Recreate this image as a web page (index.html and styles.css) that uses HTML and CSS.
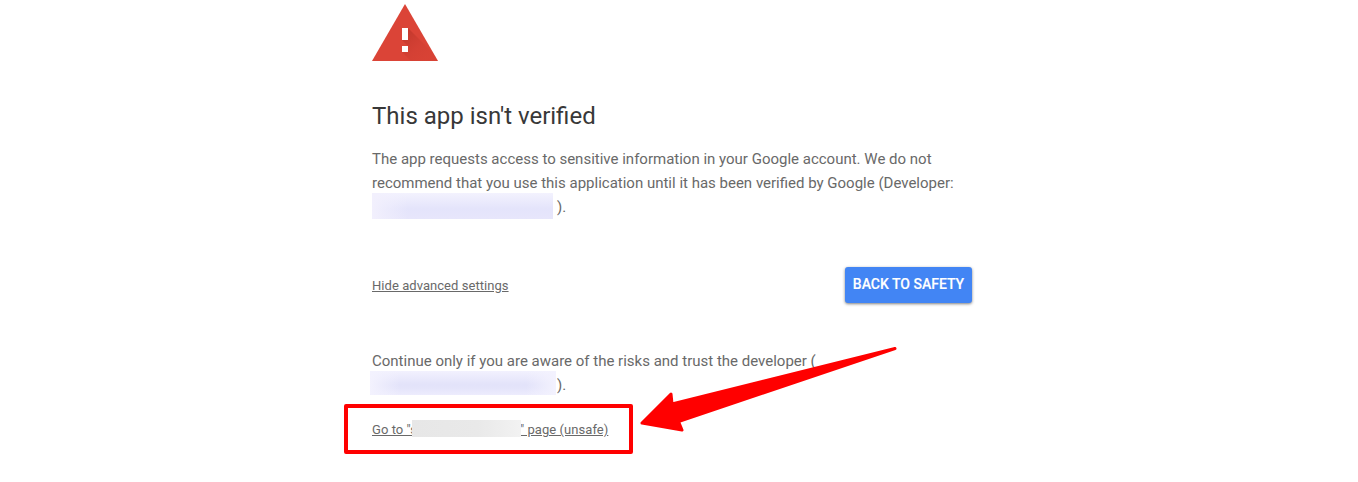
FILE: index.html
```html
<!DOCTYPE html>
<html lang="en">
<head>
<meta charset="utf-8">
<title>This app isn't verified</title>
<link rel="stylesheet" href="styles.css">
</head>
<body>
<main class="warning">
  <svg class="warning-icon" width="66" height="57" viewBox="0 0 66 57" aria-hidden="true">
    <defs>
      <clipPath id="triangle"><path d="M33 0L66 57H0z"/></clipPath>
      <linearGradient id="shade" gradientUnits="userSpaceOnUse" x1="31" y1="30" x2="54" y2="53">
        <stop offset="0" stop-color="#a52a20" stop-opacity=".45"/>
        <stop offset=".6" stop-color="#b83228" stop-opacity=".2"/>
        <stop offset="1" stop-color="#c53929" stop-opacity=".15"/>
      </linearGradient>
    </defs>
    <path d="M33 0L66 57H0z" fill="#db4437"/>
    <path d="M36 24L69 57H39L30 48L36 42L30 36z" fill="url(#shade)" clip-path="url(#triangle)"/>
    <path d="M30 24h6v12h-6zM30 42h6v6h-6z" fill="#fff"/>
  </svg>
  <h1 class="title">This app isn't verified</h1>
  <p class="text">The app requests access to sensitive information in your Google account. We do not<br>recommend that you use this application until it has been verified by Google (Developer:<br><span class="redacted redacted-first"></span>).</p>
  <div class="actions">
    <a class="link" href="#">Hide advanced settings</a>
    <button class="safe-button" type="button">BACK TO SAFETY</button>
  </div>
  <p class="text">Continue only if you are aware of the risks and trust the developer (<br><span class="redacted redacted-second"></span>).</p>
  <div class="highlight"><a class="link" href="#">Go to "s<span class="redacted redacted-name"></span>" page (unsafe)</a></div>
</main>
<svg class="arrow" width="260" height="88" viewBox="638 346 260 88" aria-hidden="true">
  <path d="M642 423L671 394L672 404L895 348.500L678.500 421.500L682 430z" fill="#f00" stroke="#f00" stroke-width="3" stroke-linejoin="round"/>
</svg>
</body>
</html>
```
FILE: styles.css
```css
body {
  margin: 0;
  background: #fff;
  color: #696969;
  font-family: Roboto, sans-serif;
}

.warning {
  width: 600px;
  margin-left: 372px;
  padding-top: 4px;
}

.warning-icon {
  display: block;
}

.title {
  margin: 39px 0 15px;
  color: #383838;
  font-size: 24px;
  font-weight: 400;
  line-height: 32px;
}

.text {
  margin: 0;
  font-size: 15px;
  line-height: 24px;
  white-space: nowrap;
}

.redacted {
  display: inline-block;
}

.redacted-first {
  width: 181px;
  height: 26px;
  margin: -8px 4px -4px 0;
  vertical-align: middle;
  background: linear-gradient(to right, #f2f0fd, rgba(242, 240, 253, 0) 20%), linear-gradient(#f3f2fe, #e4e4fb 60%, #e7e6fb);
}

.redacted-second {
  width: 186px;
  height: 24px;
  margin: -9px 1px -3px -2px;
  vertical-align: middle;
  background: linear-gradient(to right, #f3f2fe, rgba(243, 242, 254, 0) 16%, rgba(243, 242, 254, 0) 84%, #f3f2fe), linear-gradient(#f2f1fe, #e3e3fa 55%, #e4e4fa 70%, #edecfd);
}

.redacted-name {
  position: relative;
  width: 109px;
  height: 17px;
  margin: -6px -1px -2px -5px;
  vertical-align: middle;
  background: linear-gradient(to right, #e7e7e7, #e9e9e9 60%, #f2f2f2);
}

.actions {
  display: flex;
  align-items: center;
  justify-content: space-between;
  height: 36px;
  margin: 48px 0 46px;
}

.link {
  padding-top: 2px;
  color: inherit;
  font-size: 13px;
  line-height: 18px;
  letter-spacing: .05px;
  white-space: nowrap;
  text-decoration: underline;
}

.safe-button {
  width: 127px;
  height: 36px;
  padding: 0 0 2px;
  border: 0;
  border-radius: 3px;
  background: #4285f4;
  box-shadow: 0 1px 3px rgba(0, 0, 0, .5);
  color: #fff;
  font: 500 14px/20px Roboto, sans-serif;
  -webkit-text-stroke: .15px #fff;
  white-space: nowrap;
}

.highlight {
  display: flex;
  align-items: center;
  box-sizing: border-box;
  width: 289px;
  height: 50px;
  margin: 7px 0 0 -28px;
  padding-left: 24px;
  border: 4px solid #f00;
  border-radius: 2px;
}

.arrow {
  position: absolute;
  left: 638px;
  top: 346px;
}
```
